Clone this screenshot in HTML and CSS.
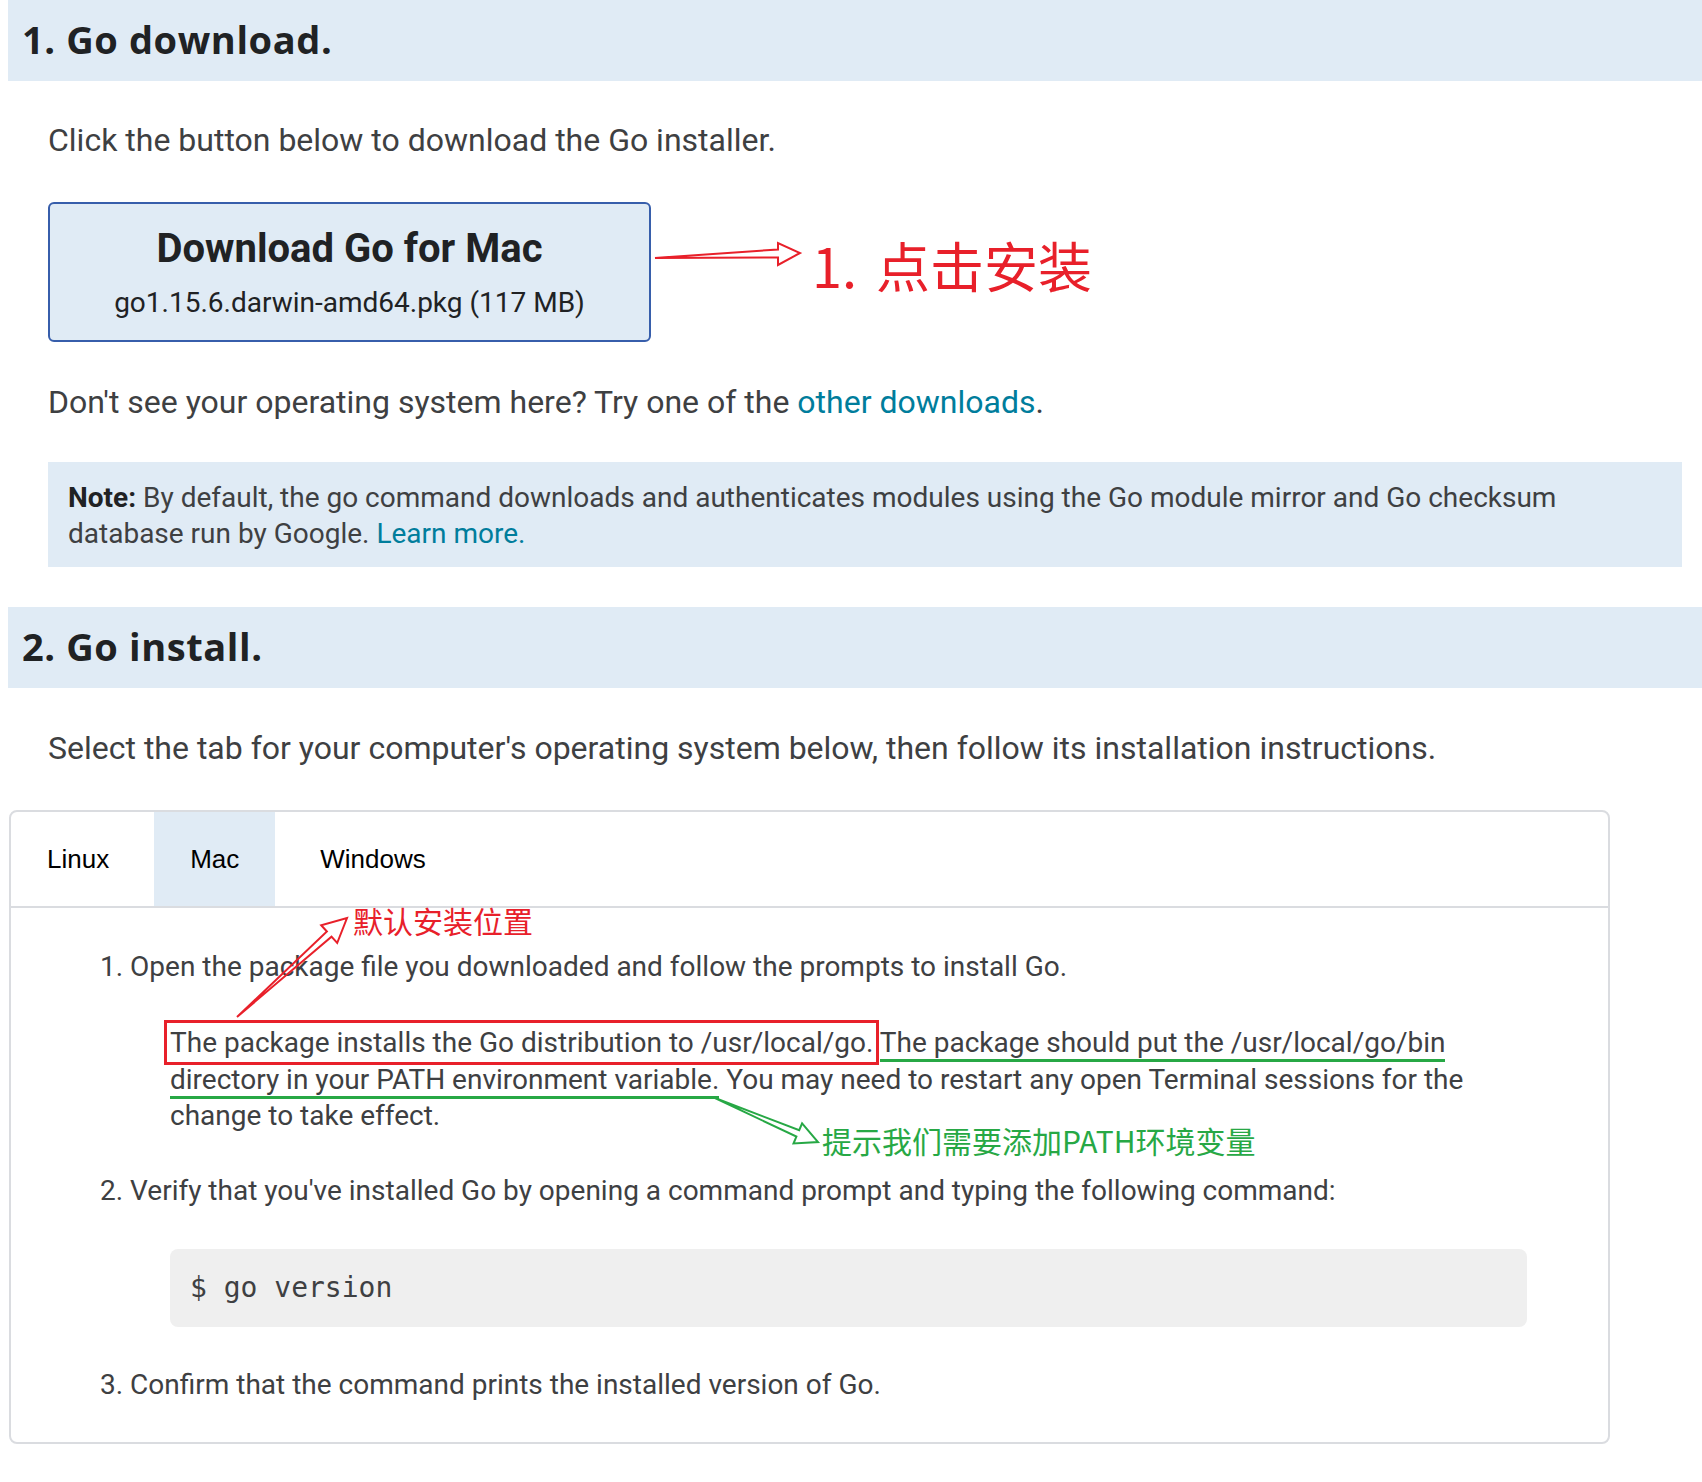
FILE: index.html
```html
<!DOCTYPE html>
<html lang="en">
<head>
<meta charset="utf-8">
<title>Download and install - The Go Programming Language</title>
<link rel="stylesheet" href="styles.css">
</head>
<body>
<div class="page">
  <h2 class="band">1. Go download.</h2>
  <section class="section">
    <p class="lead lead-first">Click the button below to download the Go installer.</p>
    <a class="dl-btn" href="#">
      <span class="dl-title">Download Go for Mac</span>
      <span class="dl-file">go1.15.6.darwin-amd64.pkg (117 MB)</span>
    </a>
    <p class="lead">Don't see your operating system here? Try one of the <a class="link" href="#">other downloads</a>.</p>
    <div class="note"><strong>Note:</strong> By default, the go command downloads and authenticates modules using the Go module mirror and Go checksum database run by Google. <a class="link" href="#">Learn more.</a></div>
  </section>
  <h2 class="band band-second">2. Go install.</h2>
  <section class="section">
    <p class="lead">Select the tab for your computer's operating system below, then follow its installation instructions.</p>
  </section>
  <div class="tabs">
    <div class="tab-list">
      <span class="tab">Linux</span>
      <span class="tab active">Mac</span>
      <span class="tab">Windows</span>
    </div>
    <div class="panel">
      <div class="step">1. Open the package file you downloaded and follow the prompts to install Go.</div>
      <p class="step-p"><span class="mark-red">The package installs the Go distribution to /usr/local/go.</span> <span class="mark-green">The package should put the /usr/local/go/bin directory in your PATH environment variable.</span> You may need to restart any open Terminal sessions for the change to take effect.</p>
      <div class="step step-after-p">2. Verify that you've installed Go by opening a command prompt and typing the following command:</div>
      <pre class="code">$ go version</pre>
      <div class="step">3. Confirm that the command prints the installed version of Go.</div>
    </div>
  </div>

  <svg class="annot-svg" width="1702" height="1482" viewBox="0 0 1702 1482" aria-hidden="true">
    <polygon class="arrow-red" points="655,258 778,249.5 778,243 800,253 778,265 778,257.5"/>
    <polygon class="arrow-red" points="237,1017 326.9,931.5 321.2,925.2 347,918 337.2,943 331.5,936.7"/>
    <polygon class="arrow-green" points="715,1098 799.2,1130.2 802.1,1123.3 818,1142 793.5,1143.5 796.4,1136.6"/>
  </svg>
  <span class="tag tag-install">1. 点击安装</span>
  <span class="tag tag-location">默认安装位置</span>
  <span class="tag tag-path">提示我们需要添加PATH环境变量</span>
</div>
</body>
</html>
```

FILE: styles.css
```css
* {
  box-sizing: border-box;
}

html,
body {
  margin: 0;
  padding: 0;
  background: #ffffff;
}

body {
  font-family: Roboto, "Noto Sans", "Liberation Sans", Arial, sans-serif;
  color: #3e4042;
}

.page {
  position: relative;
  width: 1702px;
  min-height: 1482px;
  overflow: hidden;
}

.band {
  margin: 0 0 0 8px;
  height: 81px;
  display: flex;
  align-items: center;
  padding: 0 0 4px 14px;
  background: #e0ebf5;
  font-family: "Open Sans", "Liberation Sans", sans-serif;
  font-weight: 700;
  font-size: 38px;
  letter-spacing: 0.6px;
  color: #202224;
}

.band-second {
  margin-top: 40px;
}

.section {
  padding: 0 20px 0 48px;
}

.lead {
  margin: 40px 0 0;
  font-size: 32px;
  line-height: 40px;
}

.lead-first {
  margin-top: 39px;
}

.link {
  color: #007d9c;
  text-decoration: none;
}

.dl-btn {
  margin-top: 42px;
  width: 603px;
  height: 140px;
  display: flex;
  flex-direction: column;
  align-items: center;
  gap: 12px;
  padding: 21px 0 19px;
  border: 2px solid #375eab;
  border-radius: 6px;
  background: #e0ebf5;
  color: #202224;
  text-decoration: none;
}

.dl-title {
  font-weight: 700;
  font-size: 40px;
  line-height: 48px;
}

.dl-file {
  font-size: 28px;
  line-height: 36px;
}

.note {
  margin-top: 40px;
  padding: 18px 20px 15px;
  background: #e0ebf5;
  font-size: 28px;
  line-height: 36px;
}

.note strong {
  color: #202224;
}

.tabs {
  margin: 42px 92px 0 9px;
  border: 2px solid #dadce0;
  border-radius: 8px;
}

.tab-list {
  display: flex;
  gap: 9px;
  height: 96px;
  border-bottom: 2px solid #dadce0;
}

.tab {
  display: flex;
  align-items: center;
  padding: 0 36px;
  font-family: "Liberation Sans", Arial, sans-serif;
  font-size: 26px;
  color: #000000;
}

.tab.active {
  background: #e0ebf5;
}

.panel {
  padding: 41px 81px 39px 89px;
  font-size: 28px;
  line-height: 36.4px;
}

.panel > * {
  margin: 40px 0 0;
}

.panel > :first-child {
  margin-top: 0;
}

.panel > .step-after-p {
  margin-top: 38px;
}

.step-p {
  margin-left: 70px;
}

.mark-red {
  outline: 3px solid #e8202a;
  outline-offset: 3px;
}

.mark-green {
  border-bottom: 3px solid #27a845;
}

.code {
  margin-left: 70px;
  padding: 21px 20px;
  background: #efefef;
  border-radius: 8px;
  font-family: "DejaVu Sans Mono", "Liberation Mono", monospace;
  font-size: 28px;
  line-height: 36px;
  color: #3e4042;
}

.annot-svg {
  position: absolute;
  left: 0;
  top: 0;
  pointer-events: none;
}

.arrow-red,
.arrow-green {
  fill: none;
  stroke-width: 2;
  stroke-linejoin: miter;
}

.arrow-red {
  stroke: #e8202a;
}

.arrow-green {
  stroke: #27a845;
}

.tag {
  position: absolute;
  font-family: "Noto Sans CJK SC", "Noto Sans", sans-serif;
  line-height: 1;
  white-space: nowrap;
}

.tag-install {
  left: 812px;
  top: 238px;
  font-size: 54px;
  word-spacing: 7px;
  color: #e8202a;
}

.tag-location {
  left: 353px;
  top: 905px;
  font-size: 30px;
  color: #e8202a;
}

.tag-path {
  left: 822px;
  top: 1125px;
  font-size: 30px;
  color: #27a845;
}
```
